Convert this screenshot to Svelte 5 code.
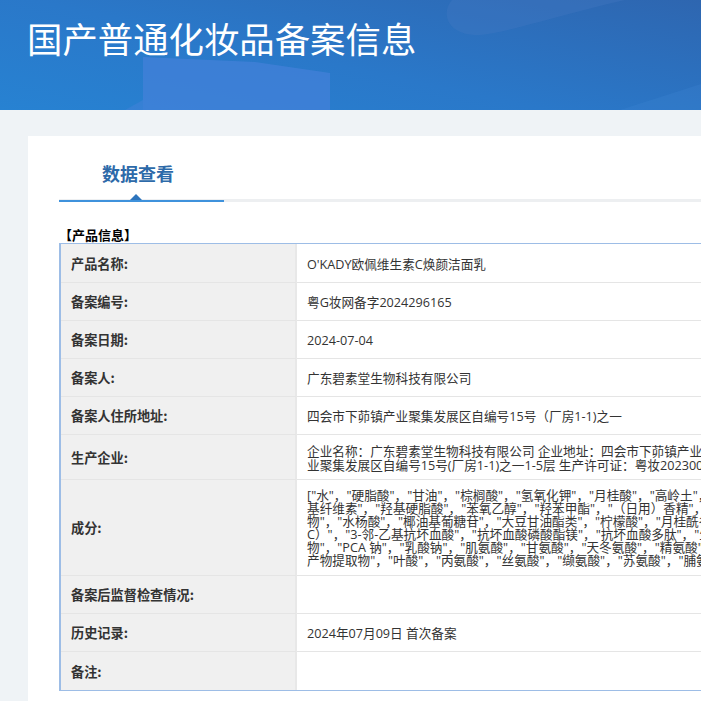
<script>
  const rows = [
    { label: '产品名称:', cls: 'first', lines: ["O'KADY欧佩维生素C焕颜洁面乳"] },
    { label: '备案编号:', lines: ['粤G妆网备字2024296165'] },
    { label: '备案日期:', lines: ['2024-07-04'] },
    { label: '备案人:', lines: ['广东碧素堂生物科技有限公司'] },
    { label: '备案人住所地址:', lines: ['四会市下茆镇产业聚集发展区自编号15号（厂房1-1)之一'] },
    {
      label: '生产企业:',
      cls: 'two',
      lines: [
        '企业名称：广东碧素堂生物科技有限公司 企业地址：四会市下茆镇产业聚集发展区',
        '业聚集发展区自编号15号(厂房1-1)之一1-5层 生产许可证：粤妆20230001'
      ]
    },
    {
      label: '成分:',
      cls: 'six',
      lines: [
        '["水"，"硬脂酸"，"甘油"，"棕榈酸"，"氢氧化钾"，"月桂酸"，"高岭土"，"羟丙',
        '基纤维素"，"羟基硬脂酸"，"苯氧乙醇"，"羟苯甲酯"，"（日用）香精"，"植物',
        '物"，"水杨酸"，"椰油基葡糖苷"，"大豆甘油酯类"，"柠檬酸"，"月桂酰谷氨',
        'C）"，"3-邻-乙基抗坏血酸"，"抗坏血酸磷酸酯镁"，"抗坏血酸多肽"，"生育酚',
        '物"，"PCA 钠"，"乳酸钠"，"肌氨酸"，"甘氨酸"，"天冬氨酸"，"精氨酸"，"谷氨',
        '产物提取物"，"叶酸"，"丙氨酸"，"丝氨酸"，"缬氨酸"，"苏氨酸"，"脯氨酸'
      ]
    },
    { label: '备案后监督检查情况:', lines: [] },
    { label: '历史记录:', lines: ['2024年07月09日 首次备案'] },
    { label: '备注:', cls: 'last', lines: [] }
  ];
</script>

<div class="page">
  <header class="banner">
    <svg class="deco" viewBox="0 0 701 110" preserveAspectRatio="none" aria-hidden="true">
      <path d="M143 57 L255 62 L330 73 L330 110 L143 110 Z" fill="#4a82dc" opacity="0.6" />
      <path d="M125 110 L143 100 L143 110 Z" fill="#4a82dc" opacity="0.4" />
      <path d="M452 0 C440 14 448 36 480 35 C510 32 570 12 625 0 Z" fill="#4a7cc4" opacity="0.3" />
      <path d="M620 110 L701 84 L701 110 Z" fill="#4a8ee0" opacity="0.18" />
    </svg>
    <h1>国产普通化妆品备案信息</h1>
  </header>

  <main class="card">
    <div class="tabs">
      <div class="tab">数据查看</div>
    </div>
    <div class="section-title">【产品信息】</div>
    <div class="table-frame">
      <table>
        <tbody>
          {#each rows as row}
            <tr class={row.cls}>
              <th>{row.label}</th>
              <td>
                {#each row.lines as line, i}{#if i > 0}<br />{/if}{line}{/each}
              </td>
            </tr>
          {/each}
        </tbody>
      </table>
    </div>
  </main>
</div>

<style>
  :global(body) {
    margin: 0;
    overflow: hidden;
    background: #eff3f6;
  }
  .page {
    width: 701px;
    height: 701px;
    overflow: hidden;
    font-family: "Noto Sans CJK SC", "Noto Sans", sans-serif;
  }
  .banner {
    position: relative;
    height: 110px;
    background: linear-gradient(12deg, #2782d2 0%, #2a78c9 45%, #2e66b0 100%);
    overflow: hidden;
  }
  .deco {
    position: absolute;
    inset: 0;
    width: 100%;
    height: 100%;
  }
  h1 {
    position: relative;
    margin: 0;
    padding: 13px 0 0 27px;
    font-size: 35.4px;
    line-height: 50px;
    font-weight: 400;
    color: #fff;
    white-space: nowrap;
  }
  .card {
    margin: 26px 0 0 28px;
    width: 1200px;
    height: 600px;
    padding: 0 0 0 31px;
    box-sizing: border-box;
    background: #fff;
  }
  .tabs {
    height: 66px;
    box-sizing: border-box;
    border-bottom: 3px solid #edeff1;
  }
  .tab {
    position: relative;
    width: 165px;
    height: 66px;
    box-sizing: border-box;
    padding: 24px 7px 0 0;
    text-align: center;
    font-size: 18px;
    line-height: 26px;
    font-weight: 700;
    color: #2d6aa9;
    border-bottom: 2px solid #3f92dc;
  }
  .tab::after {
    content: "";
    position: absolute;
    left: 71px;
    bottom: 0;
    border-left: 6px solid transparent;
    border-right: 6px solid transparent;
    border-bottom: 6px solid #2d74bd;
  }
  .section-title {
    margin-top: 25px;
    height: 16px;
    font-size: 13px;
    line-height: 16px;
    font-weight: 700;
    color: #000;
    white-space: nowrap;
  }
  .table-frame {
    width: 1100px;
    box-sizing: border-box;
    border: solid #9dbde6;
    border-width: 1px 0 1px 2px;
  }
  table {
    width: 100%;
    table-layout: fixed;
    border-collapse: separate;
    border-spacing: 0;
  }
  th, td {
    height: 38px;
    border-bottom: 1px solid #e5e5e5;
    line-height: 18px;
    box-sizing: border-box;
    white-space: nowrap;
    overflow: hidden;
    padding: 1px 0 0 10px;
    color: #333;
  }
  th {
    width: 236px;
    font-size: 13.2px;
    background: #f0f0f0;
    border-right: 2px solid #e8e8e8;
    text-align: left;
    font-weight: 700;
  }
  td {
    font-family: "Open Sans", "Noto Sans CJK SC", sans-serif;
    font-size: 12.65px;
    background: #fff;
  }
  tr.first th, tr.first td {
    height: 39px;
    padding-top: 1px;
  }
  tr.two th, tr.two td {
    height: 45px;
  }
  tr.two td {
    line-height: 14px;
  }
  tr.six th, tr.six td {
    height: 96px;
  }
  tr.six td {
    line-height: 13px;
  }
  tr.last th, tr.last td {
    border-bottom: 0;
  }
</style>
